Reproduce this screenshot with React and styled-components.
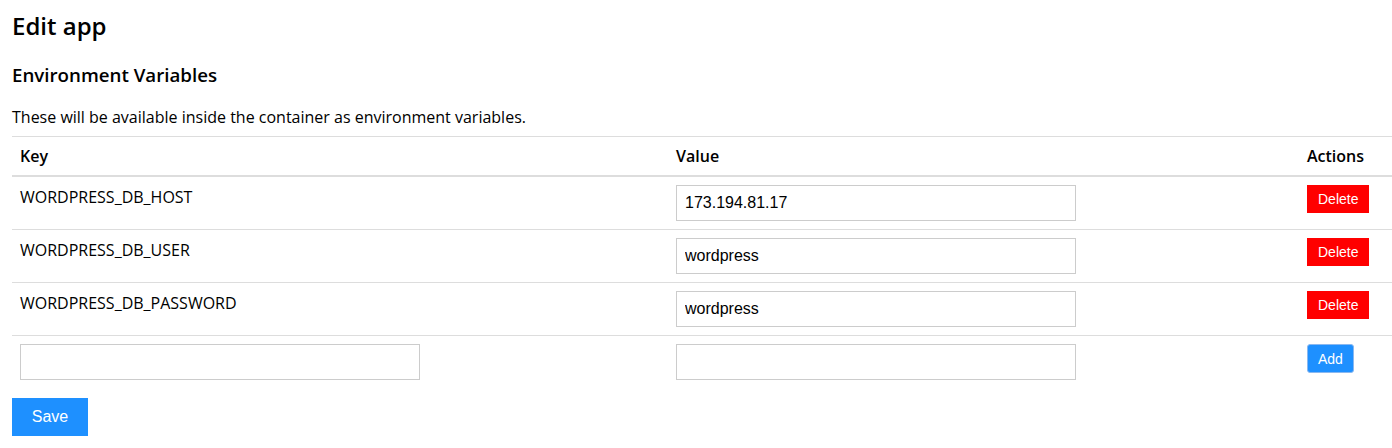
import React from "react"
import styled, { createGlobalStyle } from "styled-components"

const GlobalStyle = createGlobalStyle`
  html, body {
    margin: 0;
    padding: 0;
    background: #fff;
  }
  body {
    font-family: "Open Sans", "Noto Sans", sans-serif;
    font-size: 16px;
    color: #000;
  }
`

const vars = [
  { key: "WORDPRESS_DB_HOST", value: "173.194.81.17" },
  { key: "WORDPRESS_DB_USER", value: "wordpress" },
  { key: "WORDPRESS_DB_PASSWORD", value: "wordpress" },
]

const App = () => (
  <Page>
    <GlobalStyle />
    <Title>Edit app</Title>
    <SubTitle>Environment Variables</SubTitle>
    <Hint>These will be available inside the container as environment variables.</Hint>
    <Table>
      <colgroup>
        <col style={{ width: 656 }} />
        <col style={{ width: 631 }} />
        <col />
      </colgroup>
      <thead>
        <tr>
          <Th>Key</Th>
          <Th>Value</Th>
          <Th>Actions</Th>
        </tr>
      </thead>
      <tbody>
        {vars.map(v => (
          <tr key={v.key}>
            <Td>{v.key}</Td>
            <Td>
              <Input defaultValue={v.value} />
            </Td>
            <Td>
              <DeleteButton>Delete</DeleteButton>
            </Td>
          </tr>
        ))}
        <tr>
          <Td>
            <Input />
          </Td>
          <Td>
            <Input />
          </Td>
          <Td>
            <AddButton>Add</AddButton>
          </Td>
        </tr>
      </tbody>
    </Table>
    <SaveButton>Save</SaveButton>
  </Page>
)

export default App

const Page = styled.div`
  padding: 0 0 12px 12px;
`

const Title = styled.h2`
  margin: 0;
  padding-top: 10px;
  font-size: 24px;
  line-height: 32px;
  font-weight: 600;
`

const SubTitle = styled.h3`
  margin: 20px 0 0;
  font-size: 18.72px;
  line-height: 26px;
  font-weight: 600;
`

const Hint = styled.p`
  margin: 17px 0 7px;
  font-size: 16px;
  line-height: 24px;
`

const Table = styled.table`
  width: 1380px;
  border-collapse: collapse;
  table-layout: fixed;
  font-size: 16px;
`

const Th = styled.th`
  text-align: left;
  font-weight: 600;
  font-size: 16px;
  line-height: 22px;
  padding: 8px;
  border-top: 1px solid #ddd;
  border-bottom: 2px solid #ddd;
`

const Td = styled.td`
  vertical-align: top;
  padding: 8px;
  line-height: 24px;
  font-size: 16px;
  border-top: 1px solid #ddd;
  tr:first-child > & {
    border-top: none;
  }
`

const Input = styled.input`
  box-sizing: border-box;
  display: block;
  width: 400px;
  height: 36px;
  padding: 0 8px;
  border: 1px solid #ccc;
  border-radius: 0;
  font-family: "Liberation Sans", Arial, sans-serif;
  font-size: 16px;
  color: #000;
  outline: none;
`

const DeleteButton = styled.button`
  display: block;
  height: 28px;
  padding: 0 11px;
  border: none;
  border-radius: 0;
  background: #ff0000;
  color: #fff;
  font-family: "Liberation Sans", Arial, sans-serif;
  font-size: 14px;
`

const AddButton = styled.button`
  display: block;
  height: 29px;
  padding: 0 10px;
  border: 1px solid #8ab8f0;
  border-radius: 3px;
  background: #1e90ff;
  color: #fff;
  font-family: "Liberation Sans", Arial, sans-serif;
  font-size: 14px;
`

const SaveButton = styled.button`
  display: block;
  margin-top: 10px;
  width: 76px;
  height: 38px;
  border: none;
  border-radius: 0;
  background: #1e90ff;
  color: #fff;
  font-family: "Liberation Sans", Arial, sans-serif;
  font-size: 16px;
`
